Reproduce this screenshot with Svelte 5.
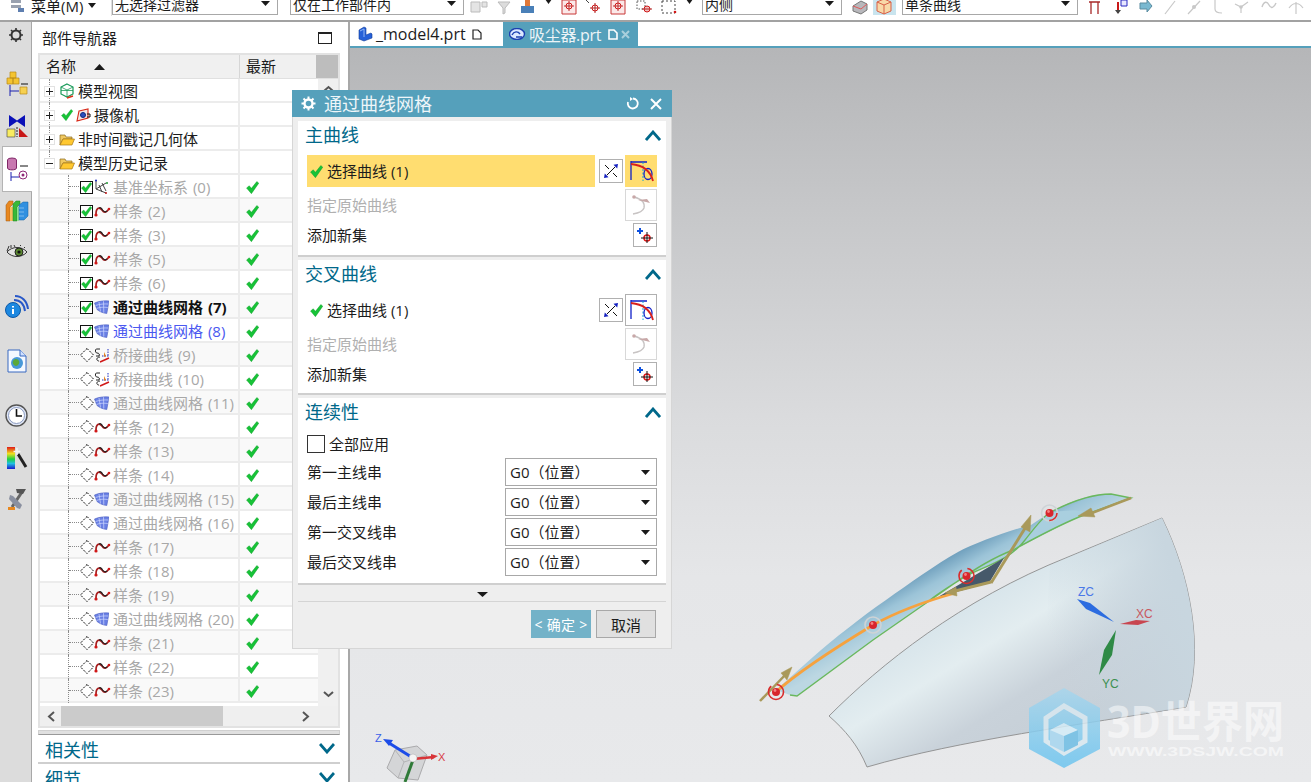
<script lang="ts">
	type Row = { label: string; kind: string; state: string; tone?: string };

	const spline = (n: number, state = "diamond"): Row => ({ label: `样条 (${n})`, kind: "spline", state, tone: "dim" });
	const mesh = (n: number, tone = "dim", state = "diamond"): Row => ({ label: `通过曲线网格 (${n})`, kind: "mesh", state, tone });
	const bridge = (n: number): Row => ({ label: `桥接曲线 (${n})`, kind: "bridge", state: "diamond", tone: "dim" });

	const history: Row[] = [
		{ label: "基准坐标系 (0)", kind: "datum", state: "box", tone: "dim" },
		spline(2, "box"),
		spline(3, "box"),
		spline(5, "box"),
		spline(6, "box"),
		mesh(7, "bold", "box"),
		mesh(8, "blue", "box"),
		bridge(9),
		bridge(10),
		mesh(11),
		spline(12),
		spline(13),
		spline(14),
		mesh(15),
		mesh(16),
		spline(17),
		spline(18),
		spline(19),
		mesh(20),
		spline(21),
		spline(22),
		spline(23),
	];

	const continuity = ["第一主线串", "最后主线串", "第一交叉线串", "最后交叉线串"];
</script>

{#snippet check(size = 12)}
	<svg class="ico" width={size} height={size} viewBox="0 0 12 12"><path d="M.5 6.5 3 4.4 5 6.800 10 .5l1.800 1.500L5 11.700Z" fill="#17c337" stroke="#0f9a2a" stroke-width=".4" /></svg>
{/snippet}

{#snippet triangle(w = 9)}
	<svg class="ico" width={w} height="5" viewBox="0 0 9 5" preserveAspectRatio="none"><path d="M0 0h9L4.500 5Z" fill="#1a1a1a" /></svg>
{/snippet}

{#snippet rowIcon(kind: string)}
	{#if kind === "spline"}
		<svg class="ico" width="17" height="12" viewBox="0 0 17 12"><path d="M2 9C2 3 5 1.500 8 5c2 3 4 3 7-1" fill="none" stroke="#a81c1c" stroke-width="1.700" /><path d="M5 3c1.500-.8 2.500 0 3.500 2 1.500 2 3 2.500 4.500.8" fill="none" stroke="#222" stroke-width="1.200" /><circle cx="2" cy="10" r="1.600" fill="#d01818" /><circle cx="15" cy="4" r="1.300" fill="#d01818" /></svg>
	{:else if kind === "mesh"}
		<svg class="ico" width="15" height="14" viewBox="0 0 15 14"><path d="M.5 3C5 1 10 .5 15 1L12.800 13.500C9 13 6 12 3 9.500Z" fill="#6a80e4" stroke="#4a5cc0" stroke-width=".6" /><path d="M5 2 6.500 11.500M9.500 1.200l.3 11.500M1.500 5.500C6 4 10 3.800 14.500 4M2.500 8.500C6 7 10 7 13.800 7.500" fill="none" stroke="#cfd8ff" stroke-width=".7" /></svg>
	{:else if kind === "bridge"}
		<svg class="ico" width="17" height="16" viewBox="0 0 17 16"><path d="M6 2H2.500C1 2 1 6 3 6s3 1.500 2 3H2M6 10c-4 0-4 4-1 4" fill="none" stroke="#222" stroke-width="1" /><path d="M14 2v7M8 9h7" fill="none" stroke="#2030c0" stroke-width="1" stroke-dasharray="1.500 1" /><path d="M6 15 15 11" stroke="#d01818" stroke-width="1.400" /><path d="M10 5v5l2-1z" fill="#e08020" /></svg>
	{:else}
		<svg class="ico" width="17" height="16" viewBox="0 0 17 16"><path d="M2 1v9M2 10l10 4M2 10l10-6M5 6l3 7M8 4l4 8" fill="none" stroke="#444" stroke-width="1" /><circle cx="2" cy="1.500" r="1" fill="#1c2cc0" /><circle cx="13" cy="4" r="1" fill="#1c9a30" /><circle cx="12" cy="14" r="1" fill="#c01818" /></svg>
	{/if}
{/snippet}

{#snippet folder()}
	<svg class="ico" width="16" height="13" viewBox="0 0 16 13"><path d="M1 12V2h5l1 2h6v2H4L1 12Z" fill="#f0c860" stroke="#8a6a20" stroke-width=".7" /><path d="M1 12 4 6h11.500L13 12Z" fill="#ffc830" stroke="#a87818" stroke-width=".7" /></svg>
{/snippet}

{#snippet expander(open = false)}
	<span class="expander">
		<svg width="9" height="9" viewBox="0 0 9 9"><path d={open ? "M1 4.500h7" : "M1 4.500h7M4.500 1v7"} stroke="#222" stroke-width="1" /></svg>
	</span>
{/snippet}

{#snippet curveSelect()}
	<svg class="ico" width="26" height="26" viewBox="0 0 26 26"><path d="M3 3v19M3 4h16" fill="none" stroke="#1020c8" stroke-width="1.300" /><path d="M15 4v19" fill="none" stroke="#10a0d0" stroke-width="1" stroke-dasharray="2 1.500" /><ellipse cx="20" cy="16" rx="4" ry="5.500" fill="none" stroke="#1020c8" stroke-width="1.300" /><path d="M3 6C13 7 22 11 25 23" fill="none" stroke="#d8201c" stroke-width="1.800" /></svg>
{/snippet}

{#snippet reverseIcon()}
	<svg class="ico" width="16" height="16" viewBox="0 0 16 16"><path d="M4 12 12 4" stroke="#111" stroke-width="1" /><path d="M2 2l4 4M14 14l-4-4" stroke="#111" stroke-width="1" /><path d="M15 1l-.8 4.500L10.500 1.800zM1 15l.8-4.500 3.700 3.700z" fill="#1420c0" /></svg>
{/snippet}

{#snippet originIcon()}
	<svg class="ico" width="26" height="26" viewBox="0 0 26 26"><path d="M6 5c8 2 11 6 10 11-1 3-5 5-11 6" fill="none" stroke="#c8c4c4" stroke-width="1.400" /><circle cx="6" cy="5" r="1.800" fill="#c8a8a8" /><path d="M10 8l12 3-3-4z" fill="#c8a8a8" /></svg>
{/snippet}

{#snippet addIcon()}
	<svg class="ico" width="18" height="18" viewBox="0 0 18 18"><path d="M1 5h6M4 2v6" stroke="#0c50e0" stroke-width="2" /><circle cx="11" cy="12" r="3" fill="none" stroke="#e01818" stroke-width="1.500" /><path d="M5 12h12M11 6v11" stroke="#111" stroke-width="1" /></svg>
{/snippet}

{#snippet chevron(up = true)}
	<svg class="ico" width="16" height="11" viewBox="0 0 16 11"><path d={up ? "M1 10 8 2l7 8" : "M1 1l7 8 7-8"} fill="none" stroke="#00688a" stroke-width="2.800" /></svg>
{/snippet}

{#snippet curveBlock(title: string, active: boolean)}
	<section class="block" class:tall={active}>
		<div class="block-head"><span>{title}</span>{@render chevron()}</div>
		<div class="pick-row">
			<div class="pick" class:active>{@render check(13)}<span>选择曲线 (1)</span></div>
			<span class="tool-btn small">{@render reverseIcon()}</span>
			<span class="tool-btn" class:active>{@render curveSelect()}</span>
		</div>
		<div class="plain-row muted"><span>指定原始曲线</span><span class="tool-btn faint">{@render originIcon()}</span></div>
		<div class="plain-row add"><span>添加新集</span><span class="tool-btn small">{@render addIcon()}</span></div>
	</section>
{/snippet}

<div class="app">
	<header class="toolbar">
		<div class="menu">
			<svg class="ico" width="16" height="16" viewBox="0 0 16 16"><path d="M1 2h10v3H1zM1 7h10v3H1z" fill="#9aa2b0" /><path d="M8 10h6v4H8z" fill="#5f7fb0" /></svg>
			<span>菜单(M)</span>
			{@render triangle(8)}
		</div>
		<div class="select w166"><span>无选择过滤器</span>{@render triangle()}</div>
		<div class="select w174"><span>仅在工作部件内</span>{@render triangle()}</div>
		<div class="tools first">
			<svg class="ico" width="18" height="16" viewBox="0 0 18 16"><path d="M1 3h9v10H1zM12 3h5v5h-5z" fill="#e4e4e4" stroke="#bbb" /></svg>
			<svg class="ico" width="14" height="16" viewBox="0 0 14 16"><path d="M1 3h12L8 9v5l-2 1V9Z" fill="#dcdcdc" stroke="#bbb" /></svg>
			<svg class="ico" width="17" height="16" viewBox="0 0 17 16"><path d="M2 7h13v7H2z" fill="#4a80b8" /><path d="M6 1h5v6H6z" fill="#e07838" /></svg>
			{@render triangle(7)}
			<svg class="ico" width="16" height="16" viewBox="0 0 16 16"><path d="M1 1h14v14H1z" fill="#fbe8e8" stroke="#c83838" /><circle cx="8" cy="7" r="3" fill="none" stroke="#d01818" /><path d="M3 7h10M8 2v10" stroke="#c03030" /></svg>
			<svg class="ico" width="16" height="16" viewBox="0 0 16 16"><circle cx="10" cy="9" r="3" fill="none" stroke="#d01818" /><path d="M5 9h10M10 4v10" stroke="#b02020" /><path d="M1 1l3 3" stroke="#444" /></svg>
			<svg class="ico" width="16" height="16" viewBox="0 0 16 16"><path d="M1 1h14v14H1z" fill="#fbe8e8" stroke="#c83838" /><circle cx="8" cy="7" r="3" fill="none" stroke="#d01818" /><path d="M3 7h10M8 2v10" stroke="#c03030" /></svg>
			<svg class="ico" width="18" height="16" viewBox="0 0 18 16"><path d="M2 2h8v8H2z" fill="none" stroke="#555" stroke-dasharray="1.500 1.500" /><circle cx="12" cy="10" r="3" fill="#f0c0c0" stroke="#d01818" /><path d="M7 10h10" stroke="#b02020" /></svg>
			<svg class="ico" width="16" height="16" viewBox="0 0 16 16"><path d="M1 2h13v12H1z" fill="none" stroke="#444" stroke-dasharray="2 2" /><circle cx="14" cy="13" r="1.300" fill="#d01818" /></svg>
			{@render triangle(7)}
		</div>
		<div class="select w140"><span>内侧</span>{@render triangle()}</div>
		<div class="tools second">
			<svg class="ico" width="18" height="16" viewBox="0 0 18 16"><path d="M2 7 10 2l6 3v6l-6 4-8-3Z" fill="#b8b8bc" stroke="#777" /><path d="M2 7l8 3 6-5" fill="none" stroke="#e05858" /></svg>
			<span class="toggle"><svg class="ico" width="16" height="17" viewBox="0 0 16 17"><path d="M8 1l7 3v9l-7 3-7-3V4z" fill="#f8d8a8" stroke="#d86048" /><path d="M1 4l7 3 7-3M8 7v9" fill="none" stroke="#d86048" /></svg></span>
		</div>
		<div class="select w176"><span>单条曲线</span>{@render triangle()}</div>
		<div class="tools third">
			<svg class="ico" width="13" height="16" viewBox="0 0 13 16"><path d="M1 3h11M3 3v12M10 3v12" fill="none" stroke="#a82828" stroke-width="1.300" /></svg>
			<svg class="ico" width="16" height="16" viewBox="0 0 16 16"><path d="M9 1h6v6H9z" fill="#e8e8ff" stroke="#2828c0" /><path d="M6 3v11" stroke="#c81818" stroke-width="2" /><path d="M3 11h6l-3 4z" fill="#444" /></svg>
			<svg class="ico" width="14" height="14" viewBox="0 0 14 14"><path d="M1 4h7V1l5 6-5 6v-3H1z" fill="#78b8d0" stroke="#5a8ca0" /></svg>
			<svg class="ico" width="12" height="16" viewBox="0 0 12 16"><path d="M1 15 11 2" stroke="#c8c8c8" stroke-width="1.200" /></svg>
			<svg class="ico" width="14" height="16" viewBox="0 0 14 16"><path d="M1 15 13 2" stroke="#c8c8c8" stroke-width="1.200" /><circle cx="7" cy="8" r="2" fill="#c8c8c8" /></svg>
			<svg class="ico" width="12" height="16" viewBox="0 0 12 16"><path d="M4 1v9c0 3 3 4 7 4" fill="none" stroke="#c8c8c8" stroke-width="1.200" /></svg>
			<svg class="ico" width="16" height="16" viewBox="0 0 16 16"><path d="M1 5l6 3 7-5M7 8v6" fill="none" stroke="#c8c8c8" stroke-width="1.200" /><circle cx="7" cy="8" r="1.800" fill="#c8c8c8" /></svg>
			<svg class="ico" width="16" height="16" viewBox="0 0 16 16"><path d="M1 8c2-6 5-6 7-2s5 3 7-2" fill="none" stroke="#c8c8c8" stroke-width="1.400" /></svg>
			<svg class="ico" width="16" height="16" viewBox="0 0 16 16"><path d="M1 9c4-6 10-6 14 0M8 3v12" fill="none" stroke="#c8c8c8" stroke-width="1.200" /></svg>
		</div>
	</header>

	<main class="body">
		<nav class="rail">
			<span class="rail-item gear">
				<svg width="16" height="16" viewBox="0 0 16 16"><circle cx="8" cy="8" r="4.500" fill="none" stroke="#333" stroke-width="2" /><path d="M8 1v2.500M8 12.500V15M1 8h2.500M12.500 8H15M3 3l1.800 1.800M11.200 11.200 13 13M3 13l1.800-1.800M11.200 4.800 13 3" stroke="#333" stroke-width="1.600" /></svg>
			</span>
			<span class="rail-item">
				<svg width="22" height="26" viewBox="0 0 22 26"><path d="M4 1h6v6H4zM1 7h6v6H1zM7 7h6v6H7z" fill="#f4c430" stroke="#b88a18" stroke-width=".7" /><path d="M14 16h7v7h-7z" fill="#f6d050" stroke="#b88a18" stroke-width=".7" /><path d="M4 14v11M4 20h9" fill="none" stroke="#1a20b0" stroke-width="1" /><path d="M15 13h7" stroke="#111" /></svg>
			</span>
			<span class="rail-item">
				<svg width="22" height="24" viewBox="0 0 22 24"><path d="M3 1l8 5.500L19 1v12l-8-5.500L3 13z" fill="#0a10b8" /><path d="M1 15h8v8H1z" fill="#f8ec60" stroke="#555" stroke-width=".7" /><path d="M13 23V14l9 9z" fill="#c81818" /><path d="M11 13v10" stroke="#222" stroke-dasharray="2 1" /></svg>
			</span>
			<span class="rail-item current">
				<svg width="22" height="24" viewBox="0 0 22 24"><ellipse cx="6" cy="3" rx="4.500" ry="2" fill="#c878b0" stroke="#802868" /><path d="M1.500 3v8c0 2.500 9 2.500 9 0V3" fill="#c878b0" stroke="#802868" /><path d="M5 15v9M5 20h8" fill="none" stroke="#1a20b0" /><path d="M14 9h8" stroke="#111" /><circle cx="17" cy="18" r="4" fill="none" stroke="#902878" /><circle cx="17" cy="18" r="1.500" fill="#902878" /></svg>
			</span>
			<span class="rail-item">
				<svg width="24" height="22" viewBox="0 0 24 22"><path d="M1 5l3-4h4v3L5 7v14H1z" fill="#e88820" stroke="#a05810" stroke-width=".5" /><path d="M5 7h3v14H5z" fill="#f6c060" /><path d="M8 4l3-3h4v3l-3 3v14H8z" fill="#38b838" stroke="#208020" stroke-width=".5" /><path d="M12 7h2v14h-2z" fill="#8fe08f" /><path d="M14 5l4-3h5v14l-4 4h-5z" fill="#3090e0" stroke="#1060a0" stroke-width=".5" /><path d="M14 8h5M14 12h5M14 16h5" stroke="#9ccff0" stroke-width=".7" /></svg>
			</span>
			<span class="rail-item">
				<svg width="22" height="14" viewBox="0 0 22 14"><path d="M1 7c5-6 15-6 20 0-5 6-15 6-20 0Z" fill="#e4e4e4" stroke="#333" /><circle cx="13" cy="7" r="4" fill="#5a8830" stroke="#222" /><circle cx="13" cy="7" r="1.600" fill="#111" /><path d="M1 6 3 1M5 3V0M9 2 8 0M14 1l1-1M18 3l1-1" stroke="#333" /></svg>
			</span>
			<span class="rail-item">
				<svg width="24" height="24" viewBox="0 0 24 24"><circle cx="8" cy="16" r="7.500" fill="#1c88e0" stroke="#0c58a8" /><path d="M7 12h2v1.500H7zM7 15h2v5H7z" fill="#fff" /><path d="M9 6c6 0 10 4 11 11M10 2c7 0 12 5 13 13" fill="none" stroke="#2858c8" stroke-width="2" /></svg>
			</span>
			<span class="rail-item">
				<svg width="20" height="24" viewBox="0 0 20 24"><path d="M1 1h12l6 6v16H1z" fill="#f4f8ff" stroke="#3868c0" /><path d="M13 1v6h6" fill="#cfe0ff" stroke="#3868c0" /><circle cx="10" cy="14" r="6" fill="#4898d8" /><path d="M6 12c2-3 5-2 6 0s-1 5-3 5-4-3-3-5Z" fill="#5ca838" /></svg>
			</span>
			<span class="rail-item">
				<svg width="23" height="23" viewBox="0 0 23 23"><circle cx="11.500" cy="11.500" r="10.500" fill="#dfe6f6" stroke="#555" stroke-width="1.400" /><circle cx="11.500" cy="11.500" r="8" fill="#fff" stroke="#8a9ac0" /><path d="M11.500 5v7H17" fill="none" stroke="#111" stroke-width="1.600" /></svg>
			</span>
			<span class="rail-item">
				<svg width="22" height="24" viewBox="0 0 22 24"><defs><linearGradient id="spectrum" x1="0" x2="0" y1="0" y2="1"><stop offset="0" stop-color="#e01818" /><stop offset=".3" stop-color="#f0e020" /><stop offset=".55" stop-color="#20d040" /><stop offset=".75" stop-color="#20c0e0" /><stop offset="1" stop-color="#1818d0" /></linearGradient></defs><path d="M1 1h8v22H1z" fill="url(#spectrum)" /><path d="M12 8 20 21" stroke="#222" stroke-width="3" /><path d="M11 2v7M7.500 5.500h7" stroke="#f4f4f4" stroke-width="1.500" /></svg>
			</span>
			<span class="rail-item">
				<svg width="20" height="24" viewBox="0 0 20 24"><path d="M5 20 15 5" stroke="#666" stroke-width="3" /><path d="M9 2h10l-3 5-6-1z" fill="#555" /><path d="M3 8l3 1 9 9-2 4-3-1-8-9z" fill="#8a90a0" /><path d="M1 20h7v3H1z" fill="#e88820" /></svg>
			</span>
		</nav>

		<aside class="navigator">
			<div class="nav-title">
				<span>部件导航器</span>
				<span class="maximize"></span>
			</div>
			<div class="tree">
				<div class="tree-main">
					<div class="columns">
						<div class="col-name">名称 <svg class="ico sort" width="11" height="6" viewBox="0 0 11 6"><path d="M0 6h11L5.500 0Z" fill="#1a1a1a" /></svg></div>
						<div class="col-new">最新</div>
						<div class="col-thumb"></div>
					</div>
					<div class="rows-wrap">
						<div class="rows">
							<div class="row top">
								<div class="cell-name">{@render expander()}
									<svg class="ico" width="16" height="16" viewBox="0 0 16 16"><path d="M8 1l6 3v7l-6 3-6-3V4z" fill="none" stroke="#189a58" stroke-width="1.200" /><path d="M2 4l6 3 6-3M8 7v7M2 7.500l12 0" fill="none" stroke="#189a58" stroke-width=".8" /><path d="M8 15l6-2" stroke="#e03018" stroke-width="1.400" /></svg>
									<span class="label">模型视图</span></div>
								<div class="cell-new"></div>
							</div>
							<div class="row top">
								<div class="cell-name">{@render expander()}
									<span class="top-check">{@render check(12)}</span>
									<svg class="ico" width="15" height="14" viewBox="0 0 15 14"><path d="M3 3 12 1v9L1 13Z" fill="#f4e4e4" stroke="#d82818" stroke-width="1.100" /><circle cx="7" cy="7" r="2.500" fill="#2a50c0" stroke="#122a80" /><path d="M11 6h3v3h-3" fill="none" stroke="#111" /></svg>
									<span class="label">摄像机</span></div>
								<div class="cell-new"></div>
							</div>
							<div class="row top">
								<div class="cell-name">{@render expander()}{@render folder()}<span class="label">非时间戳记几何体</span></div>
								<div class="cell-new"></div>
							</div>
							<div class="row top last-top">
								<div class="cell-name">{@render expander(true)}{@render folder()}<span class="label">模型历史记录</span></div>
								<div class="cell-new"></div>
							</div>
							{#each history as item}
								<div class="row child">
									<div class="cell-name">
										{#if item.state === "box"}
											<span class="state-box">{@render check(11)}</span>
										{:else}
											<svg class="ico state-dia" width="14" height="14" viewBox="0 0 14 14"><path d="M7 .5 13.500 7 7 13.500.5 7z" fill="#fff" stroke="#111" stroke-dasharray="2.200 1.300" /></svg>
										{/if}
										<span class="row-icon">{@render rowIcon(item.kind)}</span>
										<span class="label {item.tone}">{item.label}</span>
									</div>
									<div class="cell-new">{@render check(13)}</div>
								</div>
							{/each}
						</div>
						<div class="vscroll">
							<svg width="11" height="7" viewBox="0 0 11 7"><path d="M1 6l4.500-4L10 6" fill="none" stroke="#555" stroke-width="2" /></svg>
							<svg width="11" height="7" viewBox="0 0 11 7"><path d="M1 1l4.500 4L10 1" fill="none" stroke="#555" stroke-width="2" /></svg>
						</div>
					</div>
				</div>
				<div class="hscroll">
					<svg width="8" height="11" viewBox="0 0 8 11"><path d="M7 1 2 5.500 7 10" fill="none" stroke="#555" stroke-width="2" /></svg>
					<span class="thumb"></span>
					<svg width="8" height="11" viewBox="0 0 8 11"><path d="M1 1l5 4.500L1 10" fill="none" stroke="#555" stroke-width="2" /></svg>
				</div>
			</div>
			<div class="splitter"></div>
			<div class="fold"><span>相关性</span>{@render chevron(false)}</div>
			<div class="fold"><span>细节</span>{@render chevron(false)}</div>
		</aside>

		<div class="work">
			<div class="tabs">
				<div class="tab one">
					<svg class="ico" width="16" height="16" viewBox="0 0 16 16"><path d="M2 4 7 1l2 1v7l5-2 1 1v4l-8 3-5-2z" fill="#2560d8" stroke="#123c98" stroke-width=".6" /><path d="M3 5l4-2v8" fill="none" stroke="#8fb4f4" /></svg>
					<span>_model4.prt</span>
					<svg class="ico" width="10" height="11" viewBox="0 0 10 11"><path d="M1 1h5l3 3v6H1z" fill="none" stroke="#222" stroke-width="1.200" /></svg>
				</div>
				<div class="tab two">
					<svg class="ico" width="17" height="12" viewBox="0 0 17 12"><ellipse cx="8" cy="6" rx="7.500" ry="5.500" fill="#dce8ff" stroke="#1c40b0" stroke-width="1.400" /><path d="M3 7c2-4 6-4 8-1M7 9h6" fill="none" stroke="#1c40b0" stroke-width="1.400" /></svg>
					<span>吸尘器.prt</span>
					<svg class="ico" width="10" height="11" viewBox="0 0 10 11"><path d="M1 1h5l3 3v6H1z" fill="none" stroke="#fff" stroke-width="1.600" /></svg>
					<svg class="ico" width="9" height="9" viewBox="0 0 9 9"><path d="M1 1l7 7M8 1 1 8" stroke="#a9cfdc" stroke-width="2" /></svg>
				</div>
			</div>
			<div class="viewport">
				<svg class="model" viewBox="350 48 961 734" width="961" height="734">
					<defs>
						<linearGradient id="lower" gradientUnits="userSpaceOnUse" x1="900" y1="628" x2="990" y2="775">
							<stop offset="0" stop-color="#d4e2e9" />
							<stop offset=".35" stop-color="#e3edf0" />
							<stop offset=".7" stop-color="#c9d2da" />
							<stop offset="1" stop-color="#c6cfd7" />
						</linearGradient>
						<linearGradient id="lowerRight" gradientUnits="userSpaceOnUse" x1="1040" y1="600" x2="1170" y2="560">
							<stop offset="0" stop-color="#c8d6df" stop-opacity="0" />
							<stop offset="1" stop-color="#c8d6df" />
						</linearGradient>
						<linearGradient id="strip" gradientUnits="userSpaceOnUse" x1="900" y1="570" x2="925" y2="615">
							<stop offset=".15" stop-color="#6496b6" />
							<stop offset=".55" stop-color="#9cc4d8" />
							<stop offset="1" stop-color="#bcd7e2" />
						</linearGradient>
						<linearGradient id="hex" x1="0" y1="0" x2="0" y2="1">
							<stop offset="0" stop-color="#a9d6ec" />
							<stop offset="1" stop-color="#6cc4ef" />
						</linearGradient>
					</defs>

					<path d="M1162 518C1190 575 1205 650 1186 707 1080 725 960 740 867 767 858 745 845 730 829 716 880 665 960 600 1068 557Z" fill="url(#lower)" stroke="#8c8c8c" stroke-width=".9" />
					<path d="M1162 518C1190 575 1205 650 1186 707 1120 718 1090 722 1040 730L1050 565 1162 518Z" fill="url(#lowerRight)" />
					<path d="M776 690 813 657C835 638 860 618 886 600 910 583 935 565 958 552 975 543 1010 530 1031 525L1049 513C1075 498 1095 494 1111 494L1131 498 1079 517C1055 528 1033 540 1013 550L955 583 873 640 797 696 790 695Z" fill="url(#strip)" />
					<path d="M1049 513C1035 522 1030 535 1013 552 1000 562 985 566 966 576L1013 550C1033 540 1055 528 1079 517 1100 508 1060 510 1049 513Z" fill="#a9cfdf" />
					<path d="M790 695 797 696 873 640 955 583C980 565 1000 555 1013 550 1035 538 1055 527 1079 517L1131 498 1111 494C1090 494 1070 502 1049 513 1040 520 1033 530 1025 540 1010 560 985 566 966 576 950 586 940 592 930 600" fill="none" stroke="#6ab85e" stroke-width="1.400" />
					<path d="M955 587 1004 558 989 583 938 597Z" fill="#46596a" />
					<path d="M776 692C800 670 840 645 873 625 900 610 930 600 955 593" fill="none" stroke="#f6a23e" stroke-width="2.800" />

					<g fill="#a9995a" stroke="#a9995a">
						<path d="M760 701 788 672" stroke-width="2.500" />
						<path d="M792 667 781 673 787 680Z" stroke-width=".5" />
						<path d="M991 583 1027 525" stroke-width="3" />
						<path d="M1031 515 1021 527 1030 532Z" stroke-width=".5" />
						<path d="M991 582 955 591" stroke-width="3" />
						<path d="M945 593 956 587 957 596Z" stroke-width=".5" />
						<path d="M1131 498 1092 513" stroke-width="2.500" />
						<path d="M1078 516 1091 508 1095 517Z" stroke-width=".5" />
					</g>

					{#each [[776, 692, true, false], [873, 625, false, true], [966.500, 576, true, false], [1049.500, 513, true, true]] as p}
						{#if p[3]}<circle cx={p[0]} cy={p[1]} r="8" fill="none" stroke="#ced3d6" stroke-width="1.600" />{/if}
						{#if p[2]}<circle cx={p[0]} cy={p[1]} r="7.500" fill="none" stroke="#d92c2c" stroke-width="1.600" stroke-dasharray={p[3] ? "12 40" : "30 6"} />{/if}
						<circle cx={p[0]} cy={p[1]} r="4" fill="#d8262c" />
						<circle cx={p[0] - 1} cy={p[1] - 1.500} r="1.400" fill="#f48080" />
					{/each}

					<path d="M1077 599 1090 603 1114 622 1086 609Z" fill="#2c6ce0" />
					<path d="M1120 624 1136 620 1150 621 1138 625Z" fill="#c84650" />
					<path d="M1116 630 1112 655 1099 675 1104 650Z" fill="#2f8a46" />
					<text class="axis" x="1078" y="596" fill="#4a78e8">ZC</text>
					<text class="axis" x="1136" y="618" fill="#c85860">XC</text>
					<text class="axis" x="1102" y="688" fill="#3c9050">YC</text>

					<g opacity=".85">
						<path d="M1064 688 1100 708 1100 749 1064 768 1029 749 1029 708Z" fill="url(#hex)" />
						<path d="M1064 706 1085 718 1085 741 1064 753 1046 741 1046 718Z" fill="none" stroke="#d8e8f0" stroke-width="5" />
						<path d="M1064 723 1078 730 1078 745 1064 752Z" fill="#6dbde4" />
						<path d="M1064 723 1050 730 1050 745 1064 752Z" fill="#a6d6ef" />
						<path d="M1064 723 1078 730 1064 736 1050 730Z" fill="#d4ecf7" />
					</g>
					<text class="mark" x="1107" y="738" textLength="177" lengthAdjust="spacingAndGlyphs">3D世界网</text>
					<text class="mark-url" x="1108" y="756" textLength="176" lengthAdjust="spacingAndGlyphs">WWW.3DSJW.COM</text>

					<g>
						<path d="M395 750 417 746 427 755 418 780 398 778 387 768Z" fill="#d4d5d7" stroke="#aaaaac" />
						<path d="M395 750 404 762 427 755M404 762 398 778" fill="none" stroke="#b4b4b6" />
						<path d="M413 758 389 743" stroke="#1c4ce8" stroke-width="3" />
						<path d="M383 739 393 740 389 746Z" fill="#1c4ce8" />
						<path d="M413 759 434 757" stroke="#d83438" stroke-width="2.500" />
						<path d="M438 756 431 754 431 760Z" fill="#d83438" />
						<path d="M413 760 405 782" stroke="#2f7a38" stroke-width="3" />
						<circle cx="413" cy="758" r="4" fill="#f4f4f4" stroke="#aaa" stroke-width=".5" />
						<text class="axis small" x="375" y="742" fill="#3a60e8">Z</text>
						<text class="axis small" x="438" y="761" fill="#d84048">X</text>
					</g>
				</svg>
			</div>
		</div>
	</main>

	<div class="dialog">
		<div class="dialog-title">
			<svg class="ico" width="15" height="15" viewBox="0 0 15 15"><circle cx="7.500" cy="7.500" r="4" fill="none" stroke="#fff" stroke-width="2.400" /><path d="M7.500 .5v3M7.500 11.500v3M.5 7.500h3M11.500 7.500h3M2.500 2.500l2 2M10.500 10.500l2 2M2.500 12.500l2-2M10.500 4.500l2-2" stroke="#fff" stroke-width="2" /></svg>
			<span class="dialog-name">通过曲线网格</span>
			<svg class="ico" width="13" height="13" viewBox="0 0 13 13"><path d="M7 1.500A5 5 0 1 1 2 5" fill="none" stroke="#fff" stroke-width="1.800" /><path d="M4 0v4l3-2z" fill="#fff" /></svg>
			<svg class="ico close" width="12" height="12" viewBox="0 0 12 12"><path d="M1 1l10 10M11 1 1 11" stroke="#fff" stroke-width="2" /></svg>
		</div>
		<div class="dialog-body">
			{@render curveBlock("主曲线", true)}
			{@render curveBlock("交叉曲线", false)}
			<section class="block cont">
				<div class="block-head"><span>连续性</span>{@render chevron()}</div>
				<label class="apply"><span class="box"></span><span class="up">全部应用</span></label>
				{#each continuity as name}
					<div class="cont-row">
						<span class="up">{name}</span>
						<div class="combo"><span class="up">G0（位置）</span>{@render triangle()}</div>
					</div>
				{/each}
			</section>
			<div class="more">{@render triangle(11)}</div>
			<div class="actions">
				<button class="ok">&lt; 确定 &gt;</button>
				<button class="cancel">取消</button>
			</div>
		</div>
	</div>
</div>

<style>
	:global(body) {
		margin: 0;
		background: #fff;
	}

	.app {
		position: relative;
		width: 1311px;
		height: 782px;
		overflow: hidden;
		display: flex;
		flex-direction: column;
		font-family: "Open Sans", "Noto Sans CJK SC", sans-serif;
		font-size: 15px;
		color: #1c1c1c;
		background: #fff;
	}

	.ico {
		display: block;
		flex: none;
	}

	/* top toolbar, cut off by the top of the window */
	.toolbar {
		flex: none;
		box-sizing: border-box;
		height: 22px;
		border-bottom: 2px solid #a2a2a2;
		display: flex;
		align-items: flex-start;
		padding-left: 10px;
	}

	.menu {
		box-sizing: border-box;
		width: 102px;
		height: 21px;
		margin-top: -5px;
		padding-right: 8px;
		display: flex;
		align-items: center;
		gap: 5px;
		border-right: 1px solid #dedede;
		line-height: 20px;
	}

	.select {
		box-sizing: border-box;
		height: 24px;
		margin-top: -9px;
		padding: 0 7px 0 2px;
		display: flex;
		align-items: center;
		justify-content: space-between;
		border: 1px solid #a8a8a8;
		background: #fff;
		white-space: nowrap;
		font-size: 14px;
	}

	.select span {
		margin-top: 2px;
	}

	.w166 {
		width: 166px;
	}
	.w174 {
		width: 174px;
		margin-left: 12px;
	}
	.w140 {
		width: 140px;
		margin-left: 6px;
	}
	.w176 {
		width: 176px;
		margin-left: 6px;
	}

	.tools {
		height: 16px;
		margin-top: -1px;
		display: flex;
		align-items: flex-start;
	}

	.first {
		width: 232px;
		padding: 0 3px 0 6px;
		box-sizing: border-box;
		justify-content: space-between;
	}

	.second {
		width: 54px;
		padding-left: 9px;
		box-sizing: border-box;
		gap: 4px;
	}

	.toggle {
		box-sizing: border-box;
		width: 23px;
		height: 18px;
		margin-top: -2px;
		padding: 1px 3px;
		background: #c9e4ee;
	}

	.third {
		margin-left: 10px;
		width: 216px;
		justify-content: space-between;
	}

	.body {
		flex: 1;
		min-height: 0;
		display: flex;
	}

	/* left rail */
	.rail {
		flex: none;
		box-sizing: border-box;
		width: 32px;
		padding-left: 2px;
		border-right: 1px solid #a8a8a8;
		background: #dcdcdc;
		display: grid;
		grid-template-rows: 40px 44px 40px 46px 38px 44px 64px 46px 62px 24px 58px;
		align-content: start;
	}

	.rail-item {
		display: flex;
		align-items: center;
		justify-content: center;
	}

	.gear {
		padding-bottom: 14px;
		margin-left: -2px;
	}

	.current {
		margin: 0 -1px 0 0;
		border: 1px solid #b4b4b4;
		border-right: 0;
		background: #fff;
		padding-right: 2px;
	}

	/* part navigator */
	.navigator {
		flex: none;
		box-sizing: border-box;
		width: 318px;
		padding-left: 6px;
		border-right: 2px solid #a8a8a8;
		display: flex;
		flex-direction: column;
		background: #fff;
	}

	.nav-title {
		flex: none;
		box-sizing: border-box;
		height: 31px;
		padding: 0 16px 0 4px;
		display: flex;
		align-items: center;
		justify-content: space-between;
	}

	.maximize {
		box-sizing: border-box;
		width: 14px;
		height: 12px;
		border: 1px solid #222;
		border-top-width: 2px;
	}

	.tree {
		flex: none;
		box-sizing: border-box;
		width: 302px;
		height: 675px;
		border: 2px solid #e2e2e2;
		display: flex;
		flex-direction: column;
		overflow: hidden;
	}

	.tree-main {
		flex: 1;
		min-height: 0;
		display: flex;
		flex-direction: column;
	}

	.columns {
		flex: none;
		height: 24px;
		display: grid;
		grid-template-columns: 200px 77px 21px;
		background: #f0f0f0;
		border-bottom: 1px solid #e0e0e0;
		box-sizing: border-box;
		line-height: 23px;
	}

	.col-name {
		padding-left: 6px;
		display: flex;
		align-items: center;
		gap: 18px;
		border-right: 1px solid #d6d6d6;
		box-sizing: border-box;
		height: 23px;
	}

	.col-new {
		padding-left: 6px;
	}

	.col-thumb {
		background: #bdbdbd;
		margin-left: -1px;
	}

	.rows-wrap {
		flex: 1;
		min-height: 0;
		display: flex;
		overflow: hidden;
	}

	.rows {
		flex: none;
		width: 278px;
	}

	.row {
		position: relative;
		box-sizing: border-box;
		height: 24px;
		display: grid;
		grid-template-columns: 200px 78px;
		border-bottom: 2px solid #ececec;
		background: #fff;
	}

	.row:nth-child(even) {
		background: #f9f9f9;
	}

	.top:nth-child(n) {
		background: #fff;
	}

	.cell-name {
		position: relative;
		display: flex;
		align-items: center;
		white-space: nowrap;
		border-right: 2px solid #ececec;
		box-sizing: border-box;
		height: 24px;
		margin-bottom: -2px;
	}

	.cell-new {
		display: flex;
		align-items: center;
		padding-left: 6px;
		height: 24px;
		margin-bottom: -2px;
	}

	.top .cell-name {
		padding-left: 4px;
	}

	.top .cell-name::before {
		content: "";
		position: absolute;
		left: 9px;
		top: 0;
		bottom: 0;
		border-left: 1px dotted #8a8a8a;
	}

	.last-top .cell-name::before {
		bottom: 12px;
	}

	.expander {
		position: relative;
		box-sizing: border-box;
		flex: none;
		width: 11px;
		height: 11px;
		margin-right: 4px;
		display: flex;
		align-items: center;
		justify-content: center;
		background: #fff;
		border: 1px solid #e2e2e2;
	}

	.top .ico {
		margin-right: 3px;
	}

	.top-check {
		margin: 0 0 0 2px;
	}

	.label {
		margin-top: -2px;
		word-spacing: 1px;
	}

	.child .cell-name {
		padding-left: 40px;
	}

	.child .cell-name::before {
		content: "";
		position: absolute;
		left: 28px;
		top: 0;
		bottom: 0;
		border-left: 1px dotted #8a8a8a;
	}

	.child .cell-name::after {
		content: "";
		position: absolute;
		left: 29px;
		width: 10px;
		top: 11px;
		border-top: 1px dotted #8a8a8a;
	}

	.state-box {
		box-sizing: border-box;
		flex: none;
		width: 13px;
		height: 13px;
		border: 1px solid #111;
		background: #fff;
	}

	.state-dia {
		margin-right: -1px;
	}

	.row-icon {
		flex: none;
		width: 20px;
		padding-left: 1px;
		box-sizing: border-box;
	}

	.label.dim {
		color: #a8a8a8;
	}

	.label.bold {
		font-weight: 700;
		color: #111;
	}

	.label.blue {
		color: #4a58f0;
	}

	.vscroll {
		flex: none;
		width: 20px;
		background: #f0f0f0;
		display: flex;
		flex-direction: column;
		align-items: center;
		justify-content: space-between;
		padding: 6px 0 8px;
		box-sizing: border-box;
	}

	.hscroll {
		flex: none;
		height: 20px;
		background: #efefef;
		display: flex;
		align-items: center;
		padding-left: 7px;
	}

	.thumb {
		height: 100%;
		width: 162px;
		margin: 0 79px 0 6px;
		background: #cbcbcb;
	}

	.splitter {
		flex: none;
		box-sizing: border-box;
		width: 302px;
		height: 5px;
		margin-top: 2px;
		background: #e0e0e0;
		border: 1px solid #d0d0d0;
		border-bottom: 1px solid #999;
	}

	.fold {
		flex: none;
		box-sizing: border-box;
		width: 302px;
		height: 29px;
		padding: 0 5px 0 7px;
		display: flex;
		align-items: center;
		justify-content: space-between;
		font-size: 18px;
		color: #00688a;
		border-bottom: 2px solid #cfcfcf;
	}

	/* tabs and graphics window */
	.work {
		flex: 1;
		min-width: 0;
		display: flex;
		flex-direction: column;
	}

	.tabs {
		flex: none;
		box-sizing: border-box;
		height: 26px;
		border-bottom: 2px solid #55a0bb;
		display: flex;
		font-size: 16px;
	}

	.tab {
		display: flex;
		align-items: center;
		white-space: nowrap;
	}

	.one {
		box-sizing: border-box;
		width: 153px;
		padding-left: 7px;
		gap: 3px;
	}

	.one span {
		margin-right: 3px;
	}

	.two {
		width: 135px;
		box-sizing: border-box;
		padding-left: 6px;
		gap: 3px;
		background: #55a0bb;
		color: #ecf4f7;
		letter-spacing: -.3px;
	}

	.two span {
		margin-right: 4px;
	}

	.viewport {
		flex: 1;
		min-height: 0;
		position: relative;
		background: linear-gradient(180deg, #b5b6b8 0%, #c6c7c9 22%, #dadbdd 50%, #e5e6e8 72%, #e8e9eb 100%);
	}

	.model {
		position: absolute;
		left: 0;
		top: 0;
	}

	.axis {
		font-family: "Liberation Sans", sans-serif;
		font-size: 12px;
	}

	.axis.small {
		font-size: 11px;
	}

	.mark {
		font-family: "Open Sans", "Noto Sans CJK SC", sans-serif;
		font-weight: 700;
		font-size: 44px;
		fill: #fff;
		opacity: .5;
	}

	.mark-url {
		font-family: "Liberation Sans", sans-serif;
		font-weight: 700;
		font-size: 12px;
		fill: #fff;
		opacity: .55;
	}

	/* floating dialog */
	.dialog {
		position: absolute;
		left: 292px;
		top: 90px;
		box-sizing: border-box;
		width: 380px;
		height: 559px;
		background: #eee;
		border: 1px solid #d6d6d6;
		border-top: 0;
		display: flex;
		flex-direction: column;
	}

	.dialog-title {
		flex: none;
		height: 27px;
		margin: 0 -1px;
		padding: 0 10px 0 9px;
		background: #55a0bb;
		color: #eef6f9;
		font-size: 18px;
		display: flex;
		align-items: center;
	}

	.dialog-name {
		flex: 1;
		margin: -2px 0 0 8px;
	}

	.close {
		margin-left: 11px;
	}

	.dialog-body {
		flex: 1;
		min-height: 0;
		padding: 4px 5px 0;
		display: flex;
		flex-direction: column;
		gap: 3px;
	}

	.block {
		box-sizing: border-box;
		flex: none;
		height: 135px;
		padding: 0 9px;
		background: #fff;
		border-bottom: 2px solid #cfcfcf;
	}

	.block.tall {
		height: 136px;
	}

	.block-head {
		height: 28px;
		display: flex;
		align-items: center;
		justify-content: space-between;
		font-size: 18px;
		color: #00688a;
		margin: 0 -4px 0 -2px;
	}

	.block-head span,
	.up {
		margin-top: -2px;
	}

	.pick-row {
		height: 32px;
		margin-top: 6px;
		display: flex;
		align-items: center;
	}

	.pick {
		box-sizing: border-box;
		width: 288px;
		height: 32px;
		padding-left: 3px;
		display: flex;
		align-items: center;
		gap: 4px;
	}

	.pick span,
	.plain-row > span:first-child {
		margin-top: -2px;
	}

	.pick.active {
		background: #ffdd70;
	}

	.tool-btn {
		box-sizing: border-box;
		flex: none;
		width: 32px;
		height: 32px;
		margin-left: auto;
		display: flex;
		align-items: center;
		justify-content: center;
		border: 1px solid #b0b0b0;
		background: #fff;
	}

	.tool-btn.active {
		background: #ffdd70;
		border-color: #ffdd70;
	}

	.tool-btn.small {
		width: 24px;
		height: 24px;
	}

	.pick-row .tool-btn.small {
		margin: 0 2px 0 4px;
	}

	.tool-btn.faint {
		border-color: #d8d8d8;
	}

	.plain-row {
		height: 32px;
		margin-top: 2px;
		display: flex;
		align-items: center;
		justify-content: space-between;
	}

	.muted {
		color: #b0b0b0;
	}

	.add {
		height: 24px;
		margin-top: 2px;
	}

	.block.cont {
		height: 187px;
	}

	.apply {
		height: 18px;
		margin-top: 9px;
		display: flex;
		align-items: center;
		gap: 4px;
	}

	.box {
		box-sizing: border-box;
		width: 18px;
		height: 18px;
		border: 1px solid #333;
	}

	.cont-row {
		height: 28px;
		margin-top: 2px;
		display: flex;
		align-items: center;
		justify-content: space-between;
	}

	.apply + .cont-row {
		margin-top: 5px;
	}

	.combo {
		box-sizing: border-box;
		width: 152px;
		height: 28px;
		padding: 0 6px 0 4px;
		display: flex;
		align-items: center;
		justify-content: space-between;
		border: 1px solid #a8a8a8;
	}

	.more {
		flex: none;
		height: 14px;
		box-sizing: border-box;
		padding-bottom: 1px;
		display: flex;
		align-items: center;
		justify-content: center;
		border-bottom: 1px solid #d4d4d4;
	}

	.actions {
		margin-top: 5px;
		padding-right: 10px;
		display: flex;
		justify-content: flex-end;
		gap: 5px;
	}

	.actions button {
		box-sizing: border-box;
		width: 60px;
		height: 28px;
		padding: 0;
		font: inherit;
		border: 0;
	}

	.actions .ok {
		background: #73b2c8;
		color: #fff;
		letter-spacing: .3px;
		font-size: 14px;
	}

	.actions .cancel {
		background: #e0e0e0;
		border: 1px solid #a8a8a8;
		color: #1c1c1c;
	}
</style>
